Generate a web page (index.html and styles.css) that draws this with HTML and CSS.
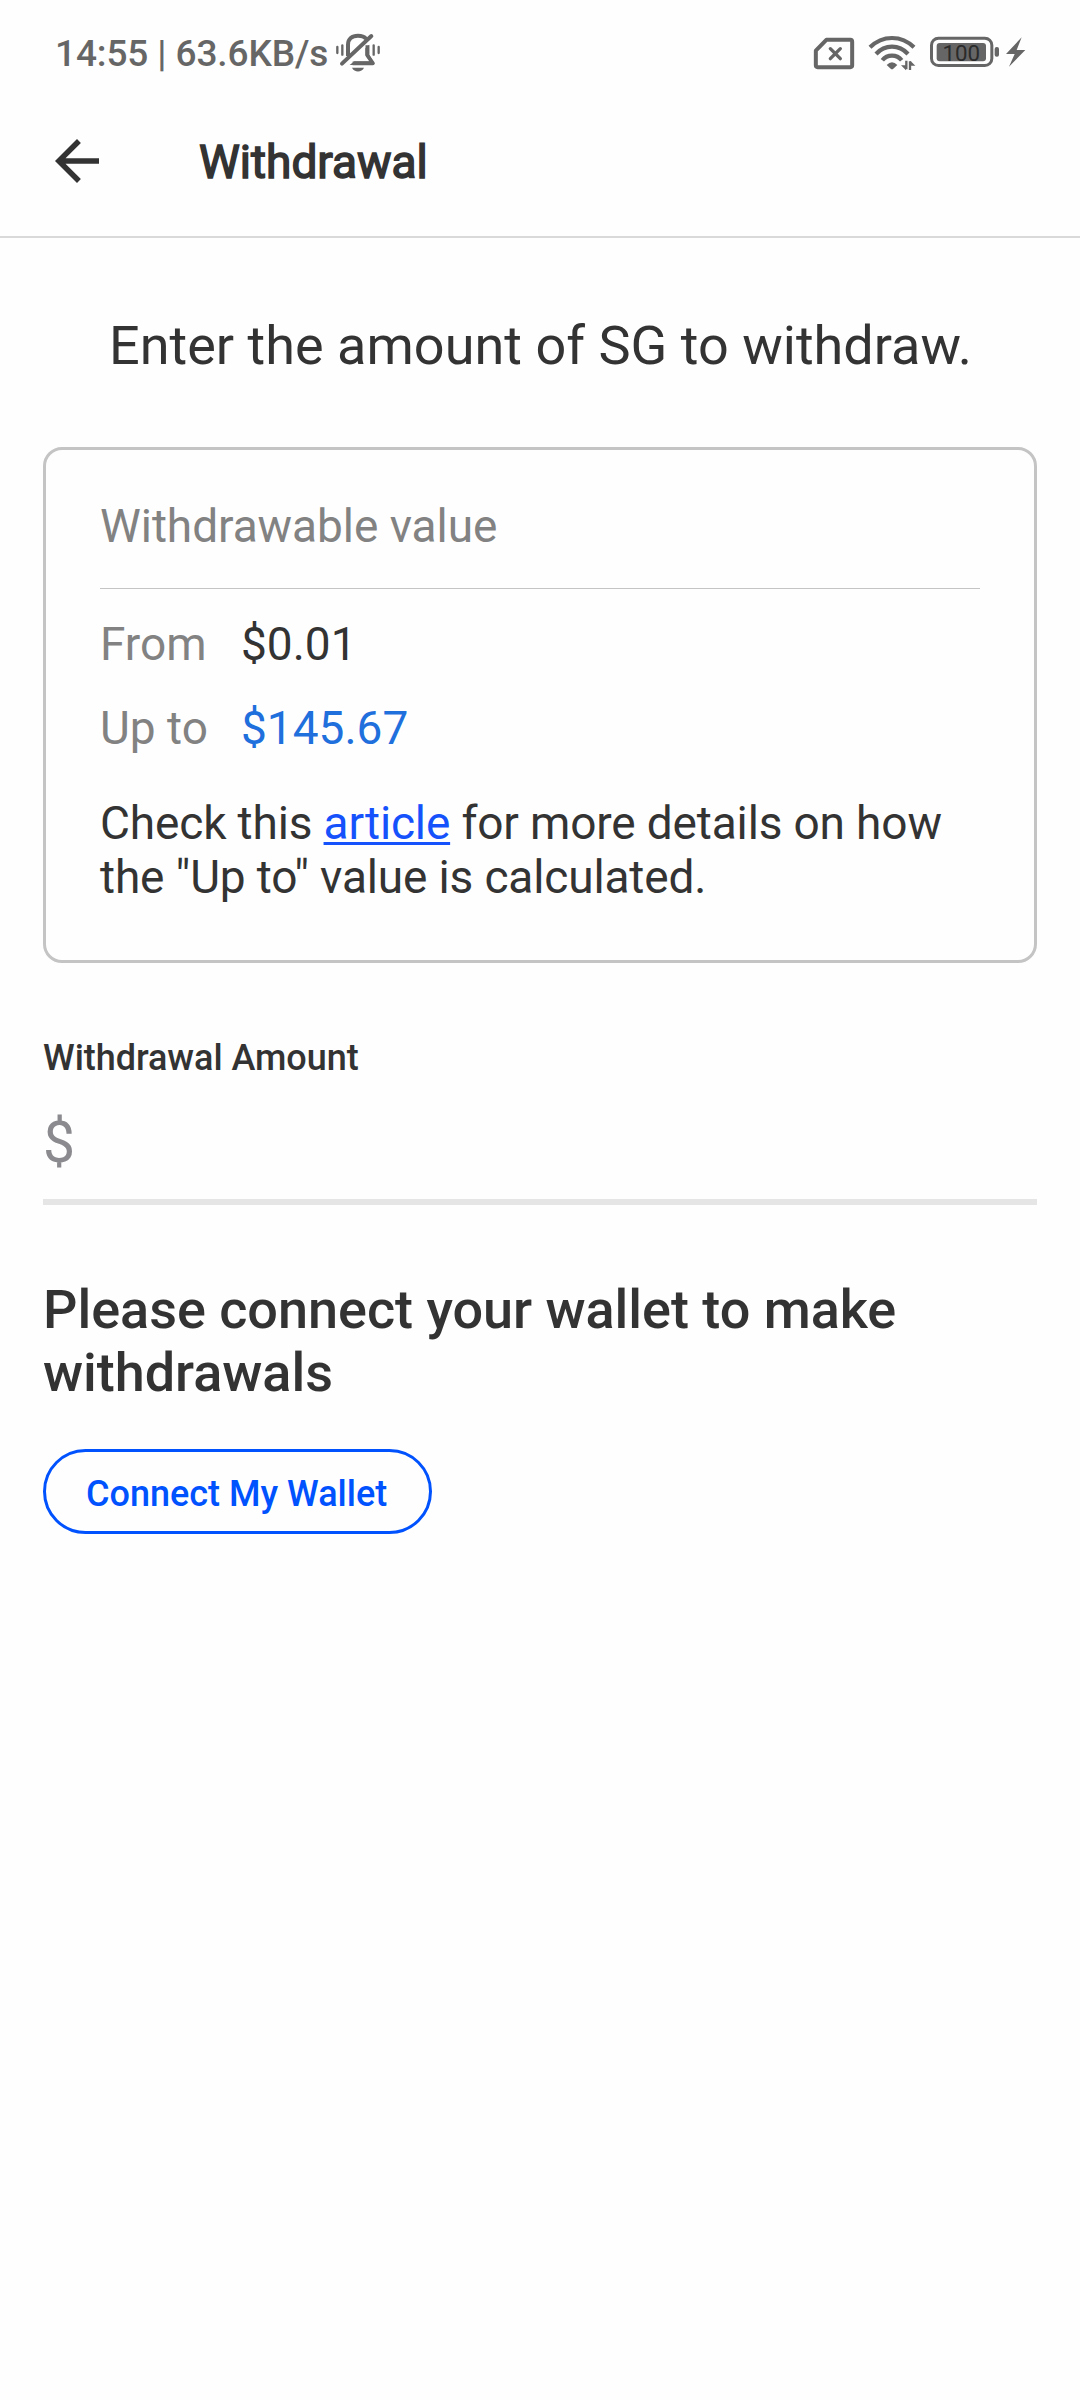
FILE: index.html
```html
<!DOCTYPE html>
<html lang="en">
<head>
<meta charset="utf-8">
<title>Withdrawal</title>
<link rel="stylesheet" href="styles.css">
</head>
<body>
<div class="status-bar">
  <span class="status-text">14:55 | 63.6KB/s</span>
  <svg class="status-icon bell" viewBox="0 -24 168 210" fill="none" stroke="#666">
    <path stroke-width="12" stroke-linejoin="round" d="M54 84V50C54 32 66 23 84 23c11 0 19 3 24 9"/>
    <path stroke-width="11" stroke-linejoin="round" d="M112 52V82l17 24H68"/>
    <path fill="#666" stroke="none" d="M59 111 73 100h47L106 82V61l12-11v30l14 24v7zM66 119h36c-7 15-29 15-36 0z"/>
    <path stroke-width="12" stroke-linecap="round" d="M36 107 124 24"/>
    <path stroke-width="7" stroke-linecap="round" d="M22 57V75M37 52V80M131 52V80M146 57V75"/>
  </svg>
  <div class="status-right">
    <svg class="status-icon sim" viewBox="66 0 132 210" fill="none" stroke="#666" stroke-linejoin="round">
      <path stroke-width="12" d="M109 59.5H181q5.5 0 5.5 5.500V136q0 5.500-5.500 5.500H83q-5.500 0-5.500-5.500V92z"/>
      <path stroke-width="10" stroke-linecap="round" d="M121 86l30 30M151 86l-30 30"/>
    </svg>
    <svg class="status-icon wifi" viewBox="0 -24 180 210" fill="none" stroke="#666" stroke-width="12.5">
      <path d="M24 58Q52 30 90 30T156 58M42 78Q62 56 90 56T138 78M61 97Q72 83 90 83T119 97"/>
      <path fill="#666" stroke="none" d="M74 111q16-16 32 0L94 122q-4 3-8 0z"/>
      <path stroke-width="7" d="M133 98V124M144 126V100"/>
      <path fill="#666" stroke="none" d="M117 112h15v15zM145 98v15h15z"/>
    </svg>
    <svg class="status-icon battery" viewBox="414 0 216 210">
      <rect x="424.500" y="54.500" width="181" height="82" rx="21" fill="none" stroke="#666" stroke-width="9"/>
      <rect x="440" y="69" width="148" height="55" rx="9" fill="#666"/>
      <rect x="614" y="81" width="13" height="29" rx="6" fill="#666"/>
      <text class="battery-level" x="514" y="122" text-anchor="middle">100</text>
    </svg>
    <svg class="status-icon bolt" viewBox="645 0 66 210" fill="#666">
      <path d="M695 52 648 102h26L657 140 706 90H680z"/>
    </svg>
  </div>
</div>

<header class="app-bar">
  <svg class="back" viewBox="0 0 24 24" fill="#333"><path d="M20 11H7.830l5.590-5.590L12 4l-8 8 8 8 1.410-1.410L7.830 13H20v-2z"/></svg>
  <h1 class="title">Withdrawal</h1>
</header>

<main class="content">
  <p class="prompt">Enter the amount of SG to withdraw.</p>

  <section class="card">
    <h2 class="card-title">Withdrawable value</h2>
    <dl class="limits">
      <dt>From</dt><dd>$0.01</dd>
      <dt>Up to</dt><dd class="max">$145.67</dd>
    </dl>
    <p class="note">Check this <a class="link" href="#">article</a> for more details on how the "Up to" value is calculated.</p>
  </section>

  <div class="amount-label">Withdrawal Amount</div>
  <div class="amount-field">$</div>

  <p class="connect-text">Please connect your wallet to make withdrawals</p>
  <button class="connect" type="button">Connect My Wallet</button>
</main>
</body>
</html>
```
FILE: styles.css
```css
* { box-sizing: border-box; }

body {
  margin: 0;
  min-height: 2400px;
  background: #fefefe;
  color: #333;
  font-family: Roboto, sans-serif;
}

h1, h2, p, dl, dd { margin: 0; font-weight: 400; }

/* Status bar */
.status-bar {
  display: flex;
  height: 107px;
  padding: 0 53px 0 55px;
  color: #666;
}

.status-text {
  width: 275px;
  font-size: 37px;
  font-weight: 500;
  line-height: 107px;
  letter-spacing: -0.12px;
  white-space: nowrap;
}

.status-right { display: flex; margin-left: auto; }
.status-icon { display: block; flex: none; height: 70px; margin-top: 20px; }
.bell { width: 56px; }
.sim { width: 44px; margin-right: 6px; }
.wifi { width: 60px; margin-right: 6px; }
.battery { width: 72px; margin-right: 5px; }
.bolt { width: 22px; }
.battery-level { fill: #2b2b2b; font-size: 67px; font-weight: 400; }

/* App bar */
.app-bar {
  display: flex;
  align-items: flex-start;
  height: 131px;
  padding: 21px 44px 0;
  border-bottom: 2px solid #d9d9d9;
}

.back { width: 66px; height: 66px; margin-right: 89px; }

.title {
  font-size: 46px;
  line-height: 68px;
  -webkit-text-stroke: 1.5px #333;
}

/* Content */
.content { padding: 76px 43px 0; }

.prompt {
  padding-left: 1px;
  font-size: 54px;
  line-height: 63px;
  letter-spacing: 0.02px;
  text-align: center;
}

.card {
  margin-top: 70px;
  padding: 49px 54px 56px;
  border: 3px solid #c4c4c4;
  border-radius: 19px;
  font-size: 46px;
  line-height: 54px;
}

.card-title {
  padding-bottom: 35px;
  border-bottom: 1px solid #c4c4c4;
  color: #828282;
  font-size: 46px;
  letter-spacing: -0.06px;
}

.limits {
  display: grid;
  grid-template-columns: 141px 1fr;
  row-gap: 30px;
  margin-top: 28px;
}

.limits dt { color: #828282; }
.max { color: #1f6fdd; }

.note { margin-top: 41px; letter-spacing: -0.15px; }

.link {
  color: #1652fc;
  text-decoration: underline;
  text-decoration-thickness: 3px;
  text-underline-offset: 3px;
  text-decoration-skip-ink: none;
}

.amount-label {
  margin-top: 74px;
  font-size: 36px;
  font-weight: 500;
  line-height: 42px;
  letter-spacing: -0.04px;
}

.amount-field {
  height: 126px;
  padding-top: 7px;
  border-bottom: 6px solid #e5e5e5;
  color: #8a8a8f;
  font-size: 57px;
  line-height: 114px;
}

.connect-text {
  margin-top: 73px;
  font-size: 54px;
  font-weight: 500;
  line-height: 63px;
  letter-spacing: -0.03px;
}

.connect {
  display: block;
  width: 389px;
  height: 85px;
  margin-top: 45px;
  padding: 5px 0 0 40px;
  border: 3px solid #0052ff;
  border-radius: 43px;
  background: none;
  color: #0052ff;
  font: 500 36px/74px Roboto, sans-serif;
  text-align: left;
  white-space: nowrap;
}
```
